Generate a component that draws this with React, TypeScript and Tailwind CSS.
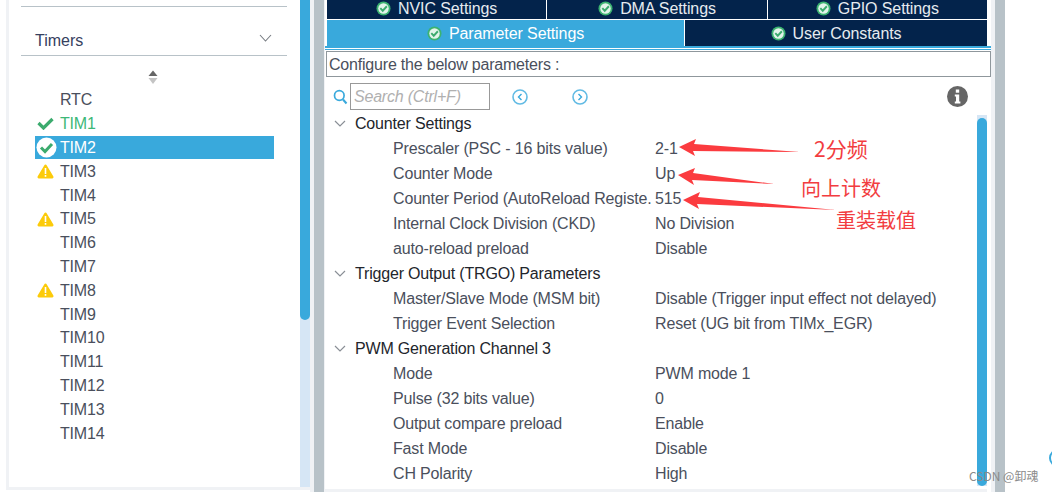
import React from "react";

const font = { fontFamily: '"Liberation Sans", Arial, sans-serif' };

function Check({ size = 15 }: { size?: number }) {
  return (
    <svg width={size} height={size} viewBox="0 0 16 16" className="shrink-0">
      <circle cx="8" cy="8" r="7.5" fill="#3cb371" />
      <circle cx="8" cy="8" r="5.6" fill="#ffffff" opacity="0.85" />
      <path d="M4.6 7.6 L7.2 10.4 L11.6 5.6" fill="none" stroke="#3cab6e" strokeWidth="2" />
    </svg>
  );
}

function Warn() {
  return (
    <svg width="17" height="15" viewBox="0 0 17 15" className="shrink-0">
      <path d="M8.5 0.5 Q9.3 0.5 9.8 1.4 L16.4 12.6 Q17 14.2 15.4 14.4 L1.6 14.4 Q0 14.2 0.6 12.6 L7.2 1.4 Q7.7 0.5 8.5 0.5 Z" fill="#fccb0a" />
      <rect x="7.7" y="4" width="1.6" height="6" fill="#fff" />
      <rect x="7.7" y="11" width="1.6" height="1.8" fill="#fff" />
    </svg>
  );
}

const timers: [string, "none" | "green" | "sel" | "warn"][] = [
  ["RTC", "none"], ["TIM1", "green"], ["TIM2", "sel"], ["TIM3", "warn"], ["TIM4", "none"],
  ["TIM5", "warn"], ["TIM6", "none"], ["TIM7", "none"], ["TIM8", "warn"], ["TIM9", "none"],
  ["TIM10", "none"], ["TIM11", "none"], ["TIM12", "none"], ["TIM13", "none"], ["TIM14", "none"],
];

function TimerRow({ name, kind }: { name: string; kind: string }) {
  return (
    <div className={`flex h-[23.8px] w-[239px] items-center ${kind === "sel" ? "bg-[#39a9dc] text-white" : kind === "green" ? "text-[#3cb878]" : "text-[#4a4f5c]"}`}>
      <div className="flex w-[25px] shrink-0 items-center">
        {kind === "sel" && (
          <svg width="21" height="21" viewBox="0 0 21 21" className="ml-[1px]">
            <circle cx="10.5" cy="10.5" r="10" fill="#fff" />
            <path d="M5 10.5 L9 14.5 L16 7" fill="none" stroke="#3cab6e" strokeWidth="3" />
          </svg>
        )}
        {kind === "green" && (
          <svg width="17" height="13" viewBox="0 0 17 13" className="ml-[2px]">
            <path d="M1.5 6 L6.5 11 L15.5 2" fill="none" stroke="#3cab6e" strokeWidth="3.2" />
          </svg>
        )}
        {kind === "warn" && <div className="ml-[2px] mt-[1px] flex"><Warn /></div>}
      </div>
      <span className="pt-[1px] text-[16px] leading-none tracking-[-0.2px]">{name}</span>
    </div>
  );
}

function Tab({ label, wide, active }: { label: string; wide?: boolean; active?: boolean }) {
  return (
    <div className={`flex items-center justify-center gap-[7px] text-[16px] tracking-[-0.1px] ${active ? "bg-[#39a9dc] text-white" : "bg-[#03234b] text-[#e6ebf0]"} ${wide ? "h-[26px] pt-[1px]" : "h-[19px] pb-[2px]"}`}>
      <Check />
      <span>{label}</span>
    </div>
  );
}

function Section({ label }: { label: string }) {
  return (
    <div className="flex h-[25px] items-center pl-[9px] text-[#22252c]">
      <svg width="12" height="7" viewBox="0 0 12 7" className="shrink-0">
        <path d="M1 1 L6 6 L11 1" fill="none" stroke="#8a8f96" strokeWidth="1.2" />
      </svg>
      <span className="ml-[9px] text-[16px] tracking-[-0.18px]">{label}</span>
    </div>
  );
}

function Param({ name, value }: { name: string; value: string }) {
  return (
    <div className="flex h-[25px] items-center text-[16px] tracking-[-0.16px] text-[#4a4f5c]">
      <span className="w-[330px] shrink-0 whitespace-nowrap pl-[68px]">{name}</span>
      <span className="whitespace-nowrap">{value}</span>
    </div>
  );
}

function Arrow({ tip, top, neckTop, tail, neckBot, bot }: { tip: string; top: string; neckTop: string; tail: string; neckBot: string; bot: string }) {
  return <polygon points={[tip, top, neckTop, tail, neckBot, bot].join(" ")} fill="#fb3b3f" />;
}

function Note({ children, className }: { children: React.ReactNode; className: string }) {
  return (
    <div className={`absolute whitespace-nowrap text-[#f23c40] ${className}`} style={{ fontFamily: '"Noto Sans CJK SC", sans-serif' }}>
      {children}
    </div>
  );
}

export default function App() {
  return (
    <div className="relative flex h-[492px] w-[1052px] overflow-hidden bg-white" style={font}>
      {/* left panel */}
      <div className="ml-[6px] flex h-[490px] w-[304px] shrink-0 border-x-[3px] border-b-[3px] border-[#f0f2f5] border-r-0 bg-white">
        <div className="flex w-[291px] shrink-0 flex-col pl-[12px]">
          <div className="h-[7px] w-[266px] border-b border-[#b8c2c8]" />
          <div className="flex h-[49px] w-[266px] items-end justify-between border-b border-[#b8c2c8] pb-[2px] pl-[14px] pr-[15px] text-[16px] text-[#36405e]">
            <span className="leading-[24px]">Timers</span>
            <svg width="13" height="8" viewBox="0 0 13 8" className="mb-[11px]">
              <path d="M1 1 L6.5 7 L12 1" fill="none" stroke="#777c82" strokeWidth="1.1" />
            </svg>
          </div>
          <div className="flex h-[29px] w-[266px] items-end justify-center">
            <svg width="12" height="15" viewBox="0 0 12 15" className="ml-[-2px]">
              <path d="M6 0.5 L10.5 6 L1.5 6 Z" fill="#666" />
              <path d="M6 14 L10.5 8 L1.5 8 Z" fill="#c4c4c4" />
            </svg>
          </div>
          <div className="mt-[3px] ml-[14px] flex flex-col">
            {timers.map(([n, k]) => <TimerRow key={n} name={n} kind={k} />)}
          </div>
        </div>
        <div className="flex w-[10px] flex-col bg-[#d6e6f5]">
          <div className="h-[320px] rounded-b-[5px] bg-[#39a9dc]" />
        </div>
      </div>
      <div className="h-[492px] w-[4px] shrink-0 bg-[#f0f2f5]" />
      <div className="h-[492px] w-[10px] shrink-0 bg-[#b8c2c8]" />
      <div className="h-[492px] w-[1px] shrink-0 bg-[#f0f2f5]" />

      {/* right panel */}
      <div className="flex w-[666px] shrink-0 flex-col">
        <div className="ml-[2px] w-[660px]">
          <div className="grid grid-cols-3 gap-x-[1px] pb-[1px]">
            <Tab label="NVIC Settings" />
            <Tab label="DMA Settings" />
            <Tab label="GPIO Settings" />
          </div>
          <div className="grid grid-cols-[357px_1fr] gap-x-[1px]">
            <Tab label="Parameter Settings" wide active />
            <Tab label="User Constants" wide />
          </div>
        </div>
        <div className="h-[2px] w-[668px] shrink-0 bg-[#39a9dc]" />
        <div className="mt-[1px] h-[1px] w-[666px] shrink-0 bg-[#39a9dc]" />
        <div className="mt-[1px] ml-[1px] flex h-[26px] w-[665px] shrink-0 items-center border border-[#8f979c] pl-[2px] pt-[1px] text-[16px] tracking-[-0.2px] text-[#4a4f5c]">
          Configure the below parameters :
        </div>
        <div className="mt-[5px] flex h-[29px] shrink-0 items-center">
          <svg width="15" height="16" viewBox="0 0 15 16" className="ml-[8px]">
            <circle cx="6.3" cy="6.5" r="4.8" fill="none" stroke="#39a9dc" strokeWidth="1.7" />
            <path d="M10 10.5 L13.5 14.5" stroke="#39a9dc" strokeWidth="2" />
          </svg>
          <div className="ml-[2px] flex h-[27px] w-[140px] items-center border border-[#999] pl-[3px] pt-[1px] text-[16px] italic tracking-[-0.2px] text-[#b0b0b0]">
            Search (Ctrl+F)
          </div>
          <svg width="16" height="16" viewBox="0 0 16 16" className="ml-[22px]">
            <circle cx="8" cy="8" r="7" fill="none" stroke="#62bbe4" strokeWidth="1.6" />
            <path d="M9.5 5 L6.5 8 L9.5 11" fill="none" stroke="#39a9dc" strokeWidth="1.4" />
          </svg>
          <svg width="16" height="16" viewBox="0 0 16 16" className="ml-[44px]">
            <circle cx="8" cy="8" r="7" fill="none" stroke="#62bbe4" strokeWidth="1.6" />
            <path d="M6.5 5 L9.5 8 L6.5 11" fill="none" stroke="#39a9dc" strokeWidth="1.4" />
          </svg>
          <svg width="21" height="21" viewBox="0 0 21 21" className="ml-[359px]">
            <circle cx="10.5" cy="10.5" r="10.5" fill="#666" />
            <rect x="8.8" y="3.5" width="3.4" height="3.2" fill="#fff" />
            <path d="M7.8 8.4 H12.2 V15.4 H13.4 V17.4 H7.8 V15.4 H9 V10.4 H7.8 Z" fill="#fff" />
          </svg>
        </div>
        <div className="flex min-h-0 flex-1">
          <div className="w-[652px] shrink-0 overflow-hidden">
            <Section label="Counter Settings" />
            <Param name="Prescaler (PSC - 16 bits value)" value="2-1" />
            <Param name="Counter Mode" value="Up" />
            <Param name="Counter Period (AutoReload Registe." value="515" />
            <Param name="Internal Clock Division (CKD)" value="No Division" />
            <Param name="auto-reload preload" value="Disable" />
            <Section label="Trigger Output (TRGO) Parameters" />
            <Param name="Master/Slave Mode (MSM bit)" value="Disable (Trigger input effect not delayed)" />
            <Param name="Trigger Event Selection" value="Reset (UG bit from TIMx_EGR)" />
            <Section label="PWM Generation Channel 3" />
            <Param name="Mode" value="PWM mode 1" />
            <Param name="Pulse (32 bits value)" value="0" />
            <Param name="Output compare preload" value="Enable" />
            <Param name="Fast Mode" value="Disable" />
            <Param name="CH Polarity" value="High" />
          </div>
          <div className="mt-[4px] h-[371px] w-[10px] shrink-0 bg-[#d6e6f5] pt-[3px]">
            <div className="h-[368px] rounded-[5px] bg-[#39a9dc]" />
          </div>
        </div>
        <div className="h-[3px] w-[662px] shrink-0 bg-[#f0f2f5]" />
      </div>
      <div className="h-[492px] w-[4px] shrink-0 bg-[#f0f2f5]" />
      <div className="h-[492px] w-[10px] shrink-0 bg-[#b8c2c8]" />

      {/* annotations */}
      <svg className="pointer-events-none absolute left-0 top-0" width="1052" height="492">
        <Arrow tip="679,147" top="696,139" neckTop="694,144" tail="800,152" neckBot="693,151" bot="695,156" />
        <Arrow tip="678,175" top="695,168" neckTop="693,173" tail="774,184" neckBot="692,180" bot="694,185" />
        <Arrow tip="683,200" top="700,192" neckTop="698,197" tail="836,210" neckBot="697,204" bot="699,209" />
      </svg>
      <Note className="left-[814px] top-[135px] text-[21px] leading-[26px]">2分频</Note>
      <Note className="left-[801px] top-[175px] text-[20px] leading-[26px]">向上计数</Note>
      <Note className="left-[836px] top-[207px] text-[20px] leading-[26px]">重装载值</Note>
      <div className="absolute left-[969px] top-[469px] text-[12px] leading-[14px] text-[#8a8a8a]" style={{ fontFamily: '"Noto Sans CJK SC", sans-serif' }}>CSDN @卸魂</div>
      <div className="absolute left-[1049px] top-[449px] h-[18px] w-[18px] rounded-full border-2 border-[#39a9dc]" />
    </div>
  );
}
